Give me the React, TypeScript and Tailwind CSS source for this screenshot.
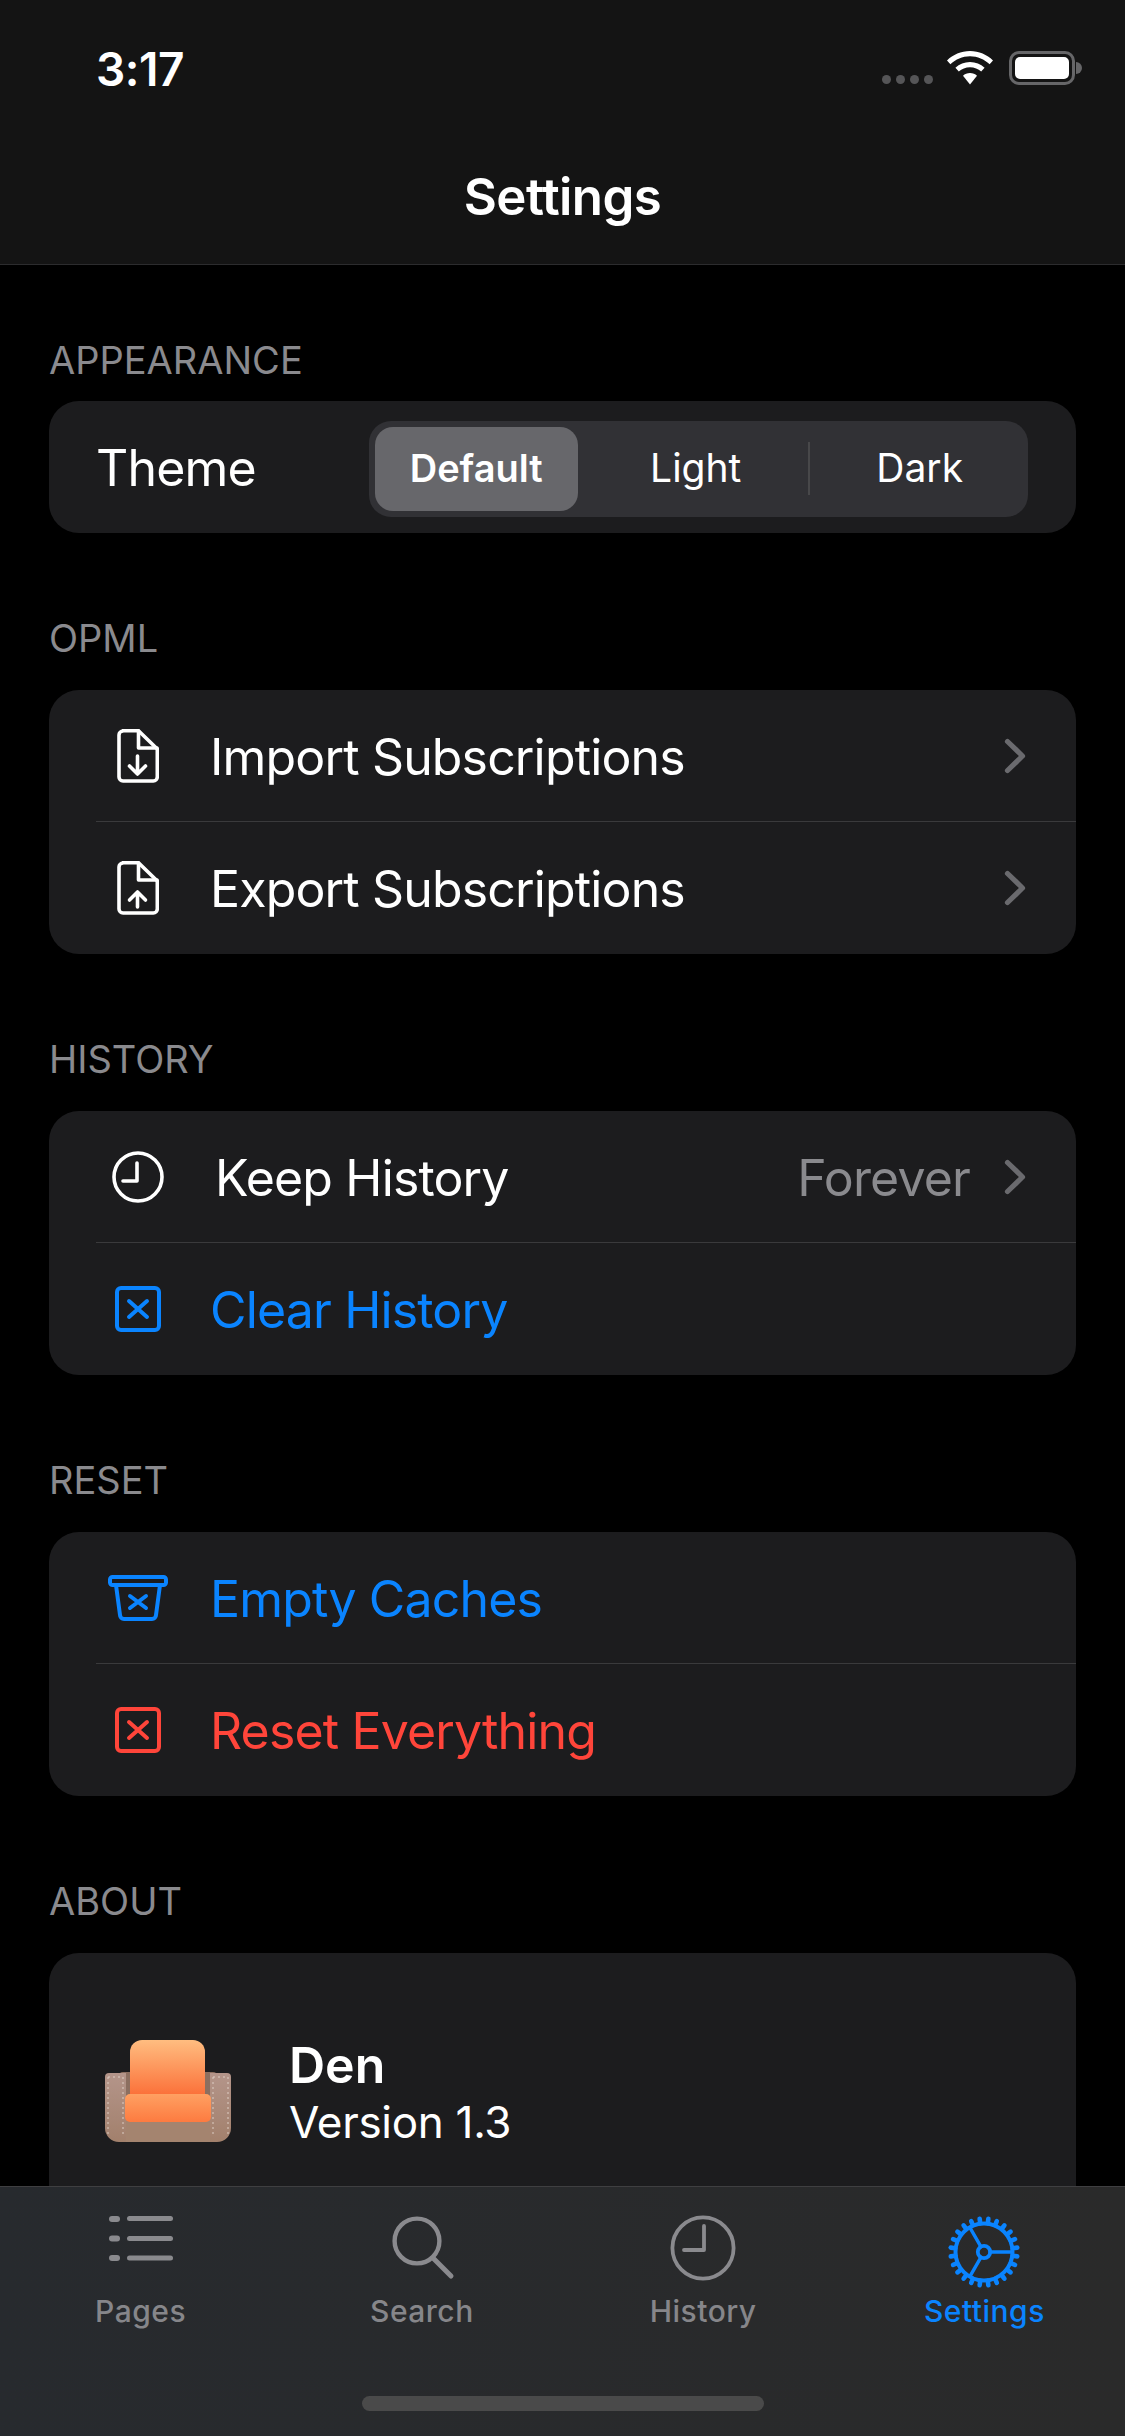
import React from 'react';

const BLUE = '#0a84ff';
const RED = '#ff453a';

const DocIcon = ({ up }: { up?: boolean }) => (
  <svg width="42" height="54" viewBox="0 0 42 54" fill="none" stroke="#fff" strokeWidth="3.6" strokeLinecap="round" strokeLinejoin="round">
    <path d="M6 1.7 H21.5 L40.3 20 V48 a4 4 0 0 1 -4 4 H6 a4 4 0 0 1 -4 -4 V6 a4 4 0 0 1 4 -4 Z" />
    <path d="M21.5 2 V19 H40" />
    {up ? <path d="M20.5 46 V31 M12.5 39 L20.5 31 L28.5 39" /> : <path d="M20.5 27 V45 M12.5 37 L20.5 45 L28.5 37" />}
  </svg>
);

const ClockIcon = () => (
  <svg width="52" height="52" viewBox="0 0 52 52" fill="none" stroke="#fff" strokeWidth="3.6" strokeLinecap="round" strokeLinejoin="round">
    <circle cx="26" cy="26" r="24" />
    <path d="M25 12 V30 H11" />
  </svg>
);

const BoxX = ({ color }: { color: string }) => (
  <svg width="46" height="46" viewBox="0 0 46 46" fill="none" stroke={color} strokeWidth="4" strokeLinecap="round" strokeLinejoin="round">
    <rect x="2" y="2" width="42" height="42" rx="4" />
    <path d="M14 15 L32 31 M32 15 L14 31" />
  </svg>
);

const BinIcon = () => (
  <svg width="60" height="46" viewBox="0 0 60 46" fill="none" stroke={BLUE} strokeWidth="4" strokeLinecap="round" strokeLinejoin="round">
    <rect x="2" y="2" width="56" height="8" rx="2.5" />
    <path d="M8 10 L12 40 a4 4 0 0 0 4 4 H44 a4 4 0 0 0 4 -4 L52 10" />
    <path d="M22 21 L38 33 M38 21 L22 33" />
  </svg>
);

const Chevron = () => (
  <svg width="22" height="36" viewBox="0 0 22 36" fill="none" stroke="#6a6a6e" strokeWidth="5.2" strokeLinecap="round" strokeLinejoin="round">
    <path d="M3.5 3.5 L18.5 18 L3.5 32.5" />
  </svg>
);

const Wifi = () => (
  <svg width="46" height="34" viewBox="0 0 46 34" fill="#fff">
    <path d="M23 0 C32 0 40 3.6 46 9.4 L42.6 13.2 C37.4 8.2 30.6 5.2 23 5.2 C15.4 5.2 8.6 8.2 3.4 13.2 L0 9.4 C6 3.6 14 0 23 0 Z" />
    <path d="M23 11 C28.6 11 33.6 13.2 37.6 16.8 L34.2 20.6 C31.2 18 27.4 16.2 23 16.2 C18.6 16.2 14.8 18 11.8 20.6 L8.4 16.8 C12.4 13.2 17.4 11 23 11 Z" />
    <path d="M23 22 C25.8 22 28.2 23 30 24.8 L23 33.4 L16 24.8 C17.8 23 20.2 22 23 22 Z" />
  </svg>
);

const Armchair = () => (
  <svg width="126" height="102" viewBox="0 0 126 102">
    <defs>
      <linearGradient id="back" x1="0" y1="0" x2="0" y2="1">
        <stop offset="0" stopColor="#ffbd80" />
        <stop offset="1" stopColor="#fb6f38" />
      </linearGradient>
      <linearGradient id="seat" x1="0" y1="0" x2="0" y2="1">
        <stop offset="0" stopColor="#ffa062" />
        <stop offset="1" stopColor="#fd7b40" />
      </linearGradient>
      <linearGradient id="arm" x1="0" y1="0" x2="0" y2="1">
        <stop offset="0" stopColor="#b4958a" />
        <stop offset="1" stopColor="#a2806c" />
      </linearGradient>
    </defs>
    <rect x="14" y="32" width="98" height="60" rx="4" fill="#8c6f60" />
    <rect x="20" y="78" width="86" height="24" fill="#a4846f" />
    <path d="M0 37 a4 4 0 0 1 4 -4 H21 V102 H14 a14 14 0 0 1 -14 -14 Z" fill="url(#arm)" />
    <path d="M126 37 a4 4 0 0 0 -4 -4 H105 V102 H112 a14 14 0 0 0 14 -14 Z" fill="url(#arm)" />
    <path d="M3 37 V96 M3 37 H18 M18 37 V96 M108 37 V96 M108 37 H123 M123 37 V96" stroke="#e2d5cc" strokeWidth="0.9" strokeDasharray="2 3" fill="none" />
    <path d="M25 12 a12 12 0 0 1 12 -12 H88 a12 12 0 0 1 12 12 V56 H25 Z" fill="url(#back)" />
    <rect x="20" y="54" width="86" height="28" rx="5" fill="url(#seat)" />
  </svg>
);

const PagesIcon = () => (
  <svg width="80" height="80" viewBox="0 0 80 80" fill="#8a8a8e">
    <rect x="8" y="8" width="11" height="6" rx="3" />
    <rect x="26" y="8" width="46" height="5" rx="2.5" />
    <rect x="8" y="27.5" width="11" height="6" rx="3" />
    <rect x="26" y="28" width="46" height="5" rx="2.5" />
    <rect x="8" y="47" width="11" height="6" rx="3" />
    <rect x="26" y="47.5" width="46" height="5" rx="2.5" />
  </svg>
);

const SearchIcon = () => (
  <svg width="80" height="80" viewBox="0 0 80 80" fill="none" stroke="#8a8a8e" strokeWidth="4.4" strokeLinecap="round">
    <circle cx="35" cy="33" r="22.4" />
    <path d="M51 50 L69 68" strokeWidth="5" />
  </svg>
);

const HistoryIcon = () => (
  <svg width="80" height="80" viewBox="0 0 80 80" fill="none" stroke="#8a8a8e" strokeWidth="3.8" strokeLinecap="round" strokeLinejoin="round">
    <circle cx="40" cy="40" r="30.6" />
    <path d="M41 18 V42 H21" />
  </svg>
);

const teeth = Array.from({ length: 24 }, (_, i) => (i * 360) / 24);

const GearIcon = () => (
  <svg width="80" height="80" viewBox="0 0 80 80" fill="none" stroke={BLUE} strokeLinecap="round">
    <g transform="translate(40 44)">
      <circle r="28.5" strokeWidth="4" />
      {teeth.map(a => (
        <path key={a} d="M0 -29 V-33.5" strokeWidth="4.6" transform={`rotate(${a + 7.5})`} />
      ))}
      <circle r="6.2" strokeWidth="3.8" />
      <path d="M6 0 H28 M-3 -5.2 L-14.2 -24.6 M-3 5.2 L-14.2 24.6" strokeWidth="3.4" />
    </g>
  </svg>
);

const SectionLabel = ({ children, first }: { children: React.ReactNode; first?: boolean }) => (
  <div className={`h-[50px] leading-[50px] text-[38px] text-[#8a8a8e] pl-[49px] ${first ? 'mb-[16px]' : 'mb-[27px]'}`}>
    {children}
  </div>
);

const Row = ({
  icon,
  label,
  color = 'text-white',
  value,
  chevron,
  divider,
  indent,
}: {
  icon: React.ReactNode;
  label: string;
  color?: string;
  value?: string;
  chevron?: boolean;
  divider?: boolean;
  indent?: boolean;
}) => (
  <div className={`ml-[47px] h-[132px] flex items-center pr-[50px] ${divider ? 'border-b border-[#3a3a3c]' : ''}`}>
    <div className="w-[84px] flex justify-center shrink-0">{icon}</div>
    <span className={`${indent ? 'ml-[35px]' : 'ml-[30px]'} mt-[3px] text-[50px] tracking-[-0.85px] ${color}`}>{label}</span>
    <div className="flex-1" />
    {value && <span className="text-[50px] mt-[3px] tracking-[-0.85px] text-[#8a8a8e] mr-[34px]">{value}</span>}
    {chevron && <Chevron />}
  </div>
);

const Card = ({ children }: { children: React.ReactNode }) => (
  <div className="mx-[49px] bg-[#1c1c1e] rounded-[30px] overflow-hidden">{children}</div>
);

const Tab = ({ icon, label, active }: { icon: React.ReactNode; label: string; active?: boolean }) => (
  <div className="flex flex-col items-center">
    <div className="h-[80px]">{icon}</div>
    <span className={`mt-[3px] text-[30px] leading-[40px] tracking-[0.5px] font-medium ${active ? 'text-[#0a84ff]' : 'text-[#86868a]'}`}>{label}</span>
  </div>
);

export default function App() {
  return (
    <div
      className="w-[1125px] h-[2436px] bg-black flex flex-col overflow-hidden text-white"
      style={{ fontFamily: 'Inter, "Noto Sans", sans-serif' }}
    >
      {/* Header */}
      <header className="h-[265px] shrink-0 bg-[#141414] border-b border-[#2c2c2e]">
        <div className="h-[136px] flex items-center justify-between pl-[96px] pr-[43px]">
          <span className="text-[46px] font-semibold tracking-[-0.5px] mt-[2px]">3:17</span>
          <div className="flex items-end">
            <div className="flex gap-[5px] mb-[1px] mr-[14px]">
              <div className="w-[9px] h-[9px] rounded-full bg-[#555557]" />
              <div className="w-[9px] h-[9px] rounded-full bg-[#555557]" />
              <div className="w-[9px] h-[9px] rounded-full bg-[#555557]" />
              <div className="w-[9px] h-[9px] rounded-full bg-[#555557]" />
            </div>
            <Wifi />
            <div className="ml-[16px] flex items-center">
              <div className="w-[66px] h-[34px] rounded-[10px] border-[3px] border-[#666668] p-[3px]">
                <div className="w-full h-full bg-white rounded-[5px]" />
              </div>
              <div className="w-[6px] h-[12px] ml-[1px] bg-[#666668] rounded-r-full" />
            </div>
          </div>
        </div>
        <div className="h-[122px] flex items-center justify-center text-[51px] font-semibold tracking-[-0.6px]">Settings</div>
      </header>

      {/* Content */}
      <main className="flex-1 overflow-hidden pt-[70px]">
        <SectionLabel first>APPEARANCE</SectionLabel>
        <Card>
          <div className="h-[132px] flex items-center pl-[47px]">
            <span className="text-[50px] tracking-[-0.85px] mt-[3px]">Theme</span>
            <div className="ml-[113px] mt-[3px] w-[659px] h-[96px] bg-[#313135] rounded-[22px] p-[6px] flex items-center">
              <div className="w-[203px] h-[84px] bg-[#67676b] rounded-[18px] flex items-center justify-center text-[38px] font-semibold">Default</div>
              <div className="w-[230px] pl-[6px] text-center text-[39px]">Light</div>
              <div className="w-[2px] h-[53px] bg-[#48484a]" />
              <div className="w-[212px] pl-[8px] text-center text-[39px]">Dark</div>
            </div>
          </div>
        </Card>

        <div className="mt-[80px]">
          <SectionLabel>OPML</SectionLabel>
          <Card>
            <Row icon={<DocIcon />} label="Import Subscriptions" chevron divider />
            <Row icon={<DocIcon up />} label="Export Subscriptions" chevron />
          </Card>
        </div>

        <div className="mt-[80px]">
          <SectionLabel>HISTORY</SectionLabel>
          <Card>
            <Row icon={<ClockIcon />} label="Keep History" value="Forever" chevron divider indent />
            <Row icon={<BoxX color={BLUE} />} label="Clear History" color="text-[#0a84ff]" />
          </Card>
        </div>

        <div className="mt-[80px]">
          <SectionLabel>RESET</SectionLabel>
          <Card>
            <Row icon={<BinIcon />} label="Empty Caches" color="text-[#0a84ff]" divider />
            <Row icon={<BoxX color={RED} />} label="Reset Everything" color="text-[#ff453a]" />
          </Card>
        </div>

        <div className="mt-[80px]">
          <SectionLabel>ABOUT</SectionLabel>
          <Card>
            <div className="h-[300px] flex pt-[87px] pl-[56px]">
              <Armchair />
              <div className="ml-[58px] -mt-[5px]">
                <div className="text-[50px] leading-[60px] font-semibold">Den</div>
                <div className="text-[44px] leading-[54px] tracking-[-0.3px]">Version 1.3</div>
              </div>
            </div>
          </Card>
        </div>
      </main>

      {/* Tab bar */}
      <nav className="h-[250px] shrink-0 bg-linear-to-r from-[#272a2e] to-[#2a2a2a] border-t border-[#3f3f41]">
        <div className="grid grid-cols-4 pt-[21px]">
          <Tab icon={<PagesIcon />} label="Pages" />
          <Tab icon={<SearchIcon />} label="Search" />
          <Tab icon={<HistoryIcon />} label="History" />
          <Tab icon={<GearIcon />} label="Settings" active />
        </div>
        <div className="w-[402px] h-[15px] mx-auto mt-[65px] rounded-full bg-[#4a4a4a]" />
      </nav>
    </div>
  );
}
